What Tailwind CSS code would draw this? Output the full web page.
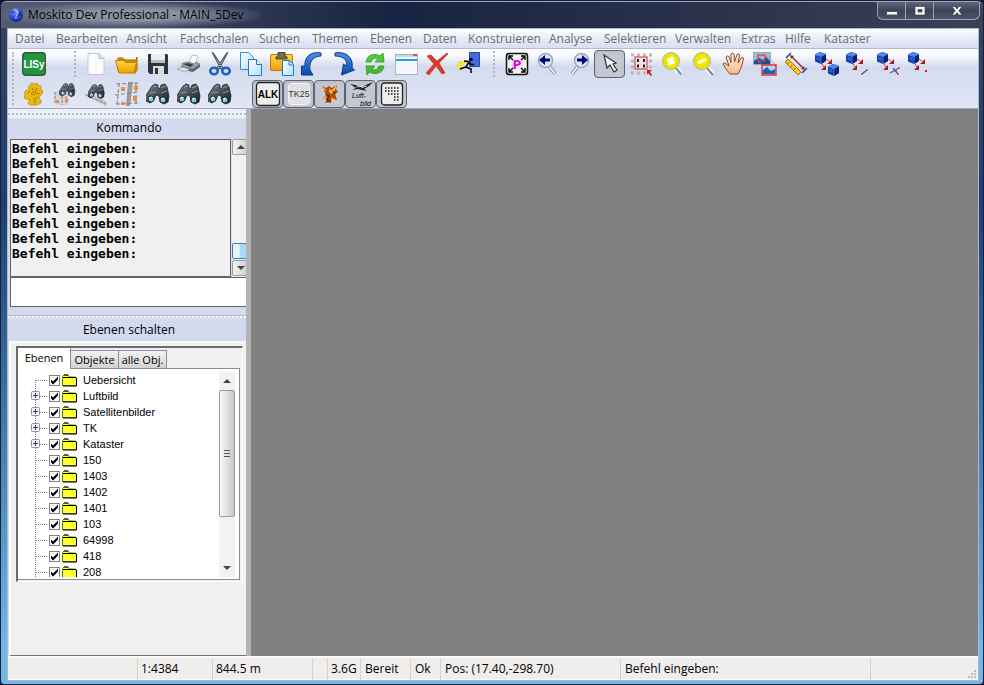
<!DOCTYPE html>
<html lang="de">
<head>
<meta charset="utf-8">
<title>Moskito Dev Professional - MAIN_5Dev</title>
<script src="https://cdn.jsdelivr.net/npm/@tailwindcss/browser@4"></script>
</head>
<body class="h-screen overflow-hidden bg-[#101830] text-xs font-['Open_Sans',sans-serif] text-black">

<svg class="absolute size-0" aria-hidden="true">
  <defs>
    <linearGradient id="gBlue" x1="0" y1="0" x2="0" y2="1"><stop offset="0" stop-color="#4a94ea"/><stop offset="1" stop-color="#0b47a8"/></linearGradient>
    <linearGradient id="gGold" x1="0" y1="0" x2="0" y2="1"><stop offset="0" stop-color="#ffd84a"/><stop offset="1" stop-color="#f0a000"/></linearGradient>
    <linearGradient id="gPage" x1="0" y1="0" x2="1" y2="1"><stop offset="0" stop-color="#fff"/><stop offset="1" stop-color="#b4defa"/></linearGradient>
    <linearGradient id="gDark" x1="0" y1="0" x2="1" y2="1"><stop offset="0" stop-color="#7c858c"/><stop offset="1" stop-color="#15191d"/></linearGradient>
    <linearGradient id="gHand" x1="0" y1="0" x2="0" y2="1"><stop offset="0" stop-color="#fff4e6"/><stop offset="1" stop-color="#f6b98a"/></linearGradient>
    <radialGradient id="gGlobe" cx=".4" cy=".25" r=".8"><stop offset="0" stop-color="#b4c6ff"/><stop offset=".4" stop-color="#3c5cf0"/><stop offset="1" stop-color="#10208a"/></radialGradient>
    <radialGradient id="gYellow"><stop offset="0" stop-color="#f8f600"/><stop offset="1" stop-color="#e2e000"/></radialGradient>
    <pattern id="dither" width="2" height="2" patternUnits="userSpaceOnUse"><rect width="2" height="2" fill="#ffff00"/><rect width="1" height="1" fill="#ffff60"/><rect x="1" y="1" width="1" height="1" fill="#ffff60"/></pattern>
  </defs>
  <symbol id="bino" viewBox="0 0 24 24">
    <path d="M6 4l3-2 3 1v3l2 .5L15 3l4-1 2 3 2 9-1 6-4 2-4-2-1-6-3-1-2 5-4 3-4-2-1-4z" fill="url(#gDark)" stroke="#20262b" stroke-width=".8"/>
    <path d="M7 5l4-1M15 6l5-2M4 11l6-1M15 11l6-2" stroke="#8c979f" stroke-width="1"/>
    <circle cx="5" cy="17" r="3" fill="#7cc8ea" stroke="#20282c" stroke-width="1"/><circle cx="17" cy="18" r="3" fill="#7cc8ea" stroke="#20282c" stroke-width="1"/>
    <path d="M3.500 16.500l2-1.500M15.500 17.500l2-1.500" stroke="#e8fbff" stroke-width="1.200"/>
  </symbol>
  <symbol id="cube" viewBox="0 0 11 12">
    <path d="M0 2.500L5 0l6 2v7l-5 3-6-2.500z" fill="#1440b0"/><path d="M0 2.500L5 0l6 2-5 2.500z" fill="#4f82ee"/><path d="M6 4.500L11 2v7l-5 3z" fill="#0a2070"/>
    <path d="M1.500 4.500l3 1.200v3l-3-1.200z" fill="#2b62da"/><path d="M0 2.500l6 2L11 2M6 4.500V12" stroke="#88b0ff" stroke-width=".5" fill="none"/>
  </symbol>
  <symbol id="cubearrows" viewBox="0 0 26 26">
    <use href="#cube" x="1" y="1" width="11" height="12"/>
    <path d="M12 8l3 2M8 13l2 3" stroke="#b04848"/><path d="M18 8v5h-5zM12 14v5H7z" fill="#b01818"/>
  </symbol>
  <symbol id="check" viewBox="0 0 11 11"><path d="M2 4.500v3l2 2 5-5v-3l-5 5z" fill="#000"/></symbol>
  <symbol id="folder" viewBox="0 0 15 13"><path d="M.5 11.500v-9L2 1h4l1.500 2h6l1 1v7.500z" fill="url(#dither)" stroke="#707000"/><path d="M14.500 4v8H1M1 3.500h13M2 1h4" fill="none" stroke="#000"/></symbol>
</svg>

<div class="flex h-full flex-col rounded-t-md rounded-b-sm border border-[#14203c] bg-linear-to-b from-[#39415a] from-0% via-[#1d4070] via-30% to-[#6fb9e4] to-95%">

  <header class="flex h-[27px] shrink-0 items-start justify-between rounded-t-md border-t border-[#a0a6b4] bg-linear-to-r from-[#555c72] via-[#182343] via-40% to-[#3b4054]">
    <div class="flex h-full items-center gap-1 rounded-full bg-radial from-[#8a91a2] from-30% to-transparent to-75% pr-4 pl-[7px]">
      <svg class="size-4" viewBox="0 0 16 16"><circle cx="8" cy="8" r="7" fill="url(#gGlobe)"/><path d="M2 5l3-2 3 2-2 2zM9 6l4-2 1 4-4 1zM7 9l2 1-1 4z" fill="#101c70" opacity=".55"/><path d="M8 4l2 1v2l-2 2v3" stroke="#c9d6ff" fill="none"/></svg>
      <h1>Moskito Dev Professional - MAIN_5Dev</h1>
    </div>
    <div class="mr-[3px] flex h-[18px] overflow-hidden rounded-b-md border border-t-0 border-[#9ea3b0] bg-linear-to-b from-[#60667a] via-[#3c4258] to-[#4c5268]">
      <button aria-label="Minimieren" class="grid w-7 place-items-center border-r border-[#9ea3b0]"><svg class="h-3 w-4" viewBox="0 0 16 12"><rect x="2.500" y="6.500" width="11" height="3.500" fill="#f4f4f4" stroke="#555"/></svg></button>
      <button aria-label="Maximieren" class="grid w-7 place-items-center border-r border-[#9ea3b0]"><svg class="h-3 w-4" viewBox="0 0 16 12"><path d="M3 1.500h10v8.500H3zM6 4.500V7h4V4.500z" fill="#f8f8f8" fill-rule="evenodd" stroke="#444" stroke-width=".7"/></svg></button>
      <button aria-label="Schließen" class="grid w-[45px] place-items-center"><svg class="h-3 w-4" viewBox="0 0 16 12"><path d="M3 1.500h3L8 4l2-2.500h3L9.800 5.800 13 10h-3L8 7.500 6 10H3l3.200-4.200z" fill="#fff" stroke="#444" stroke-width=".7"/></svg></button>
    </div>
  </header>

  <div class="mr-[4px] mb-[3px] ml-[6px] flex min-h-0 grow flex-col border border-[#a9bcd4] bg-[#d3daee]">

    <nav class="grid h-5 shrink-0 grid-cols-[41px_70px_54px_79px_53px_58px_53px_45px_81px_55px_71px_66px_44px_39px_60px] items-center border-b border-[#b5bccb] bg-linear-to-b from-white via-[#e9edf7] via-45% to-[#d8def0] pl-[7px] whitespace-nowrap text-[#6d6d6d]">
      <a href="#">Datei</a><a href="#">Bearbeiten</a><a href="#">Ansicht</a><a href="#">Fachschalen</a><a href="#">Suchen</a><a href="#">Themen</a><a href="#">Ebenen</a><a href="#">Daten</a><a href="#">Konstruieren</a><a href="#">Analyse</a><a href="#">Selektieren</a><a href="#">Verwalten</a><a href="#">Extras</a><a href="#">Hilfe</a><a href="#">Kataster</a>
    </nav>

    <div class="flex h-[60px] shrink-0 border-b border-[#a0a8bc] bg-linear-to-b from-[#fafbfe] from-10% via-[#d4dbee] via-30% to-[#e1e7f5] pl-1">
      <div class="my-[3px] mr-1 w-0 border-l-2 border-dotted border-[#b3b8c4]"></div>
      <div class="flex flex-col">
        <div class="flex h-[30px] items-center">
          <button aria-label="LISy" class="grid h-[30px] w-[31px] place-items-center"><svg class="size-6" viewBox="0 0 24 24"><rect x=".7" y=".7" width="22.600" height="22.600" rx="3" fill="#21963f" stroke="#3c5545" stroke-width="1.400"/><text x="12" y="16" text-anchor="middle" font-family="Liberation Sans, sans-serif" font-size="10" font-weight="bold" fill="#fff">LISy</text></svg></button>
          <div class="mr-1 ml-[25px] h-[26px] w-0 border-l-2 border-dotted border-[#b3b8c4]"></div>
          <button aria-label="Neu" class="grid h-[30px] w-[31px] place-items-center"><svg class="size-6" viewBox="0 0 24 24"><path d="M4 1.500h11l5 5v16H4z" fill="#fafafa" stroke="#c5c8cc"/><path d="M15 1.500v5h5" fill="#dedede" stroke="#bbb"/></svg></button>
          <button aria-label="Öffnen" class="grid h-[30px] w-[31px] place-items-center"><svg class="size-6" viewBox="0 0 24 24"><path d="M3 19V6h5l2 2h11l1-3v13l-2 3z" fill="#d99000" stroke="#a86c00"/><path d="M.5 8.500h8l2 2h11L19 21H4z" fill="url(#gGold)" stroke="#bd8000"/></svg></button>
          <button aria-label="Speichern" class="grid h-[30px] w-[31px] place-items-center"><svg class="size-6" viewBox="0 0 24 24"><path d="M2 2h19l1 1v19H4l-2-2z" fill="#30343a"/><path d="M5 2h14v9H5z" fill="#eceef0"/><path d="M5 8h14v3H5z" fill="#b8bec5"/><path d="M7 14h11v8H7z" fill="#d8dce0"/><path d="M9 16h3v6H9z" fill="#30343a"/></svg></button>
          <button aria-label="Drucken" class="grid h-[30px] w-[31px] place-items-center"><svg class="size-6" viewBox="0 0 24 24"><path d="M12 11l3-8 6 1-3 8z" fill="#fff" stroke="#a0a5ab" stroke-width=".7"/><path d="M5 11l7-1 6 2 1-2 4 2-7 5-11-3z" fill="#9da2a8" stroke="#70757b" stroke-width=".6"/><path d="M3 14l13 3 7-5v3l-7 5-9-2z" fill="#5d6268"/><path d="M6 12l5-1 6 2-4 2z" fill="#3c4147"/><path d="M0 17l5-2 8 2-5 3z" fill="#dce0e6" stroke="#83888e" stroke-width=".6"/></svg></button>
          <button aria-label="Ausschneiden" class="grid h-[30px] w-[31px] place-items-center"><svg class="size-6" viewBox="0 0 24 24"><path d="M4 0l2 2 9 14-2 1zM20 0l-2 2-9 14 2 1z" fill="#d3d8dc" stroke="#50565c" stroke-width="1.100"/><ellipse cx="6" cy="19" rx="3.800" ry="3.300" fill="none" stroke="#1763bf" stroke-width="2.500"/><ellipse cx="18" cy="19" rx="3.800" ry="3.300" fill="none" stroke="#1763bf" stroke-width="2.500"/></svg></button>
          <button aria-label="Kopieren" class="grid h-[30px] w-[31px] place-items-center"><svg class="size-6" viewBox="0 0 24 24"><path d="M1.500.500h8l5 5v12h-13z" fill="url(#gPage)" stroke="#2790e2"/><path d="M9.500 7.500h8l5 5v11h-13z" fill="url(#gPage)" stroke="#1c7bd4"/><path d="M17.500 7.500v5h5" fill="#e8f6ff" stroke="#1c7bd4"/></svg></button>
          <button aria-label="Einfügen" class="grid h-[30px] w-[31px] place-items-center"><svg class="size-6" viewBox="0 0 24 24"><rect x=".5" y="2.500" width="22" height="16" rx="1.500" fill="url(#gGold)" stroke="#b87818"/><path d="M8 4V.5h7V4l2 1v2H6V5z" fill="#786951" stroke="#504432"/><path d="M12.500 8.500h7l4 4v11h-11z" fill="url(#gPage)" stroke="#1c7bd4"/><path d="M19 8v5h4" fill="none" stroke="#1c7bd4"/></svg></button>
          <button aria-label="Rückgängig" class="grid h-[30px] w-[31px] place-items-center"><svg class="size-6" viewBox="0 0 24 24"><path d="M20 1C10-1 3 5 4 14H.5v9H12l-3-5c-1-7 2-14 11-14z" fill="url(#gBlue)" stroke="#0b3b86"/></svg></button>
          <button aria-label="Wiederholen" class="grid h-[30px] w-[31px] place-items-center"><svg class="size-6" viewBox="0 0 24 24"><path d="M3 1C13-1 22 5 20 16l2.500 2-13 5 2-11 3 2C16 8 11 4 3 4z" fill="url(#gBlue)" stroke="#0b3b86"/></svg></button>
          <button aria-label="Aktualisieren" class="grid h-[30px] w-[31px] place-items-center"><svg class="size-6" viewBox="0 0 24 24"><path d="M3 10c1-8 10-9 14-6l3-3 1 9h-9l3-3c-4-2-6 0-7 3z" fill="#51c83b" stroke="#37a72b"/><path d="M21 14c-1 8-10 9-14 6l-3 3-1-9h9l-3 3c4 2 6 0 7-3z" fill="#43b932" stroke="#37a72b"/></svg></button>
          <button aria-label="Fenster" class="grid h-[30px] w-[31px] place-items-center"><svg class="size-6" viewBox="0 0 24 24"><rect x="1.500" y="2.500" width="22" height="20" fill="#f5f6f8" stroke="#aab2bb"/><path d="M2 3h21v2H2z" fill="#b8d8ec"/><path d="M2 7h21v2H2z" fill="#2a9bd4"/><path d="M19 2h4v2h-4z" fill="#d85a4a"/></svg></button>
          <button aria-label="Löschen" class="grid h-[30px] w-[31px] place-items-center"><svg class="size-6" viewBox="0 0 24 24"><path d="M2 4l4-1 6 6 10-8 1 1-9 9 6 10-3 1-6-8-7 9-3-2 8-9z" fill="#dc3b28" stroke="#bd2618" stroke-width=".6"/></svg></button>
          <button aria-label="Beenden" class="grid h-[30px] w-[31px] place-items-center"><svg class="size-6" viewBox="0 0 24 24"><path d="M13.500.500h10v14h-10z" fill="#446bd9" stroke="#2348ae"/><path d="M2 10.500h8M0 13.500h7M2 16.500h5" stroke="#f5e200" stroke-width="2"/><circle cx="15" cy="7.500" r="1.800"/><path d="M8 9l4 .5 3 3h3M13 10l-3 5-6 2M10 15l5 2v4" fill="none" stroke="#000" stroke-width="1.500"/></svg></button>
          <div class="mr-[6px] ml-[10px] h-[26px] w-0 border-l-2 border-dotted border-[#b3b8c4]"></div>
          <button aria-label="Alles zeigen" class="grid h-[30px] w-[31px] place-items-center"><svg class="size-6" viewBox="0 0 24 24"><rect x="1.500" y="1.500" width="21" height="21" rx="2.500" fill="#f2f2f2" stroke="#111" stroke-width="1.500"/><path d="M4 8V4h4M16 4h4v4M20 16v4h-4M8 20H4v-4M4 4l4 4M20 4l-4 4M20 20l-4-4M4 20l4-4" fill="none" stroke="#000" stroke-width="1.400"/><text x="12" y="16.500" text-anchor="middle" font-family="DejaVu Sans, sans-serif" font-size="12" font-weight="bold" fill="#f000e8">P</text></svg></button>
          <button aria-label="Voriger Zoom" class="grid h-[30px] w-[31px] place-items-center"><svg class="size-6" viewBox="0 0 24 24"><path d="M13 14l6 8" stroke="#777e88" stroke-width="3.500"/><path d="M13 14l6 8" stroke="#eef0f3" stroke-width="2"/><circle cx="9.500" cy="8.500" r="7" fill="#dbeaf8" stroke="#98a8bc" stroke-width="1.500"/><path d="M3 8l6-5v3.500h5v3H9V13z" fill="#04047c"/></svg></button>
          <button aria-label="Nächster Zoom" class="grid h-[30px] w-[31px] place-items-center"><svg class="size-6" viewBox="0 0 24 24"><path d="M11 14l-6 8" stroke="#777e88" stroke-width="3.500"/><path d="M11 14l-6 8" stroke="#eef0f3" stroke-width="2"/><circle cx="14.500" cy="8.500" r="7" fill="#dbeaf8" stroke="#98a8bc" stroke-width="1.500"/><path d="M21 8l-6-5v3.500h-5v3h5V13z" fill="#04047c"/></svg></button>
          <button aria-label="Auswahl" class="grid h-[28px] w-[31px] place-items-center rounded border border-[#5e6470] bg-[#c3c8d4] shadow-inner"><svg class="size-6" viewBox="0 0 24 24"><path d="M6 3l3 13 3-3 4 7 3-2-4-6 3-1z" fill="#f5f5f5" stroke="#303438" stroke-width="1.200"/></svg></button>
          <button aria-label="Bereich wählen" class="grid h-[30px] w-[31px] place-items-center"><svg class="size-6" viewBox="0 0 24 24"><path d="M2 3h21M2 9h21M2 15h21M2 21h17" stroke="#b4b7bc" stroke-width="3" stroke-dasharray="3 3"/><rect x="6" y="5" width="12" height="12" fill="#efe3e9" stroke="#e34141" stroke-width="1.200"/><path d="M8 8.500h2M14 8.500h2M8 14h2M14 14h2" stroke="#202020" stroke-width="3"/><path d="M18 18h5l-2 2 2 3-1 1-3-3-1 2z" fill="#df1212"/></svg></button>
          <button aria-label="Vergrößern" class="grid h-[30px] w-[31px] place-items-center"><svg class="size-6" viewBox="0 0 24 24"><path d="M15 15l6 7" stroke="#fff" stroke-width="5"/><path d="M15 15l6 7" stroke="#9299a0" stroke-width="2.500"/><path d="M18 20l3 3" stroke="#35c3d8" stroke-width="1.500"/><circle cx="11" cy="9" r="8.500" fill="url(#gYellow)" stroke="#b2b5a0"/><path d="M7.500 7l7 4M13 5l-4 8" stroke="#fff" stroke-width="3.400"/></svg></button>
          <button aria-label="Verkleinern" class="grid h-[30px] w-[31px] place-items-center"><svg class="size-6" viewBox="0 0 24 24"><path d="M15 15l6 7" stroke="#fff" stroke-width="5"/><path d="M15 15l6 7" stroke="#9299a0" stroke-width="2.500"/><path d="M19 20l3 3" stroke="#9562c0" stroke-width="1.500"/><circle cx="11" cy="9" r="8.500" fill="url(#gYellow)" stroke="#b2b5a0"/><path d="M7 11l8-4" stroke="#fff" stroke-width="3"/></svg></button>
          <button aria-label="Verschieben" class="grid h-[30px] w-[31px] place-items-center"><svg class="size-6" viewBox="0 0 24 24"><path d="M8 22l-4-5-3-5q1-2 3 0l3 2L4 5q1-2 3-.5l2 6V2q1.500-2 3 0l.5 8L15 2.500q2-1.500 2.500.5L16 11l3.500-5.500q2-.5 2 1.500L19 16l-3 6z" fill="url(#gHand)" stroke="#8d4a24"/></svg></button>
          <button aria-label="Übersicht" class="grid h-[30px] w-[31px] place-items-center"><svg class="size-6" viewBox="0 0 24 24"><rect x=".5" y=".5" width="17" height="12" fill="#98bde0" stroke="#a0a5ad"/><path d="M1 9l5-3 4 2 3-3 4 4v3H1z" fill="#164f9c"/><rect x="5" y="3" width="7" height="6" fill="none" stroke="#e83a3a" stroke-width="1.200"/><path d="M5 9l4 4M12 3l11 10" stroke="#e87070" stroke-width=".7"/><rect x="9" y="13" width="14" height="10" fill="#b8d5ef" stroke="#e02020" stroke-width="1.300"/><path d="M10 18l4-3 4 4 4-2v5H10z" fill="#2563aa"/></svg></button>
          <button aria-label="Messen" class="grid h-[30px] w-[31px] place-items-center"><svg class="size-6" viewBox="0 0 24 24"><path d="M4 7l13 13-3 3L1 10z" fill="#ffc725" stroke="#a87600"/><path d="M5 10l-1 2M8 13l-1 2M11 16l-1 2" stroke="#805800" stroke-width=".8"/><path d="M2 6l5-5M18 21l5-5" stroke="#1c49a2" stroke-width="1.500"/><path d="M8 5l11 11" stroke="#a02020" stroke-width="1.200"/><path d="M6 3l4 1-3 3zM21 18l-4-1 3-3z" fill="#a02020"/></svg></button>
          <button aria-label="Objekt kopieren" class="grid h-[30px] w-[31px] place-items-center"><svg class="size-[26px]" viewBox="0 0 26 26"><use href="#cubearrows" width="26" height="26"/><use href="#cube" x="14" y="13" width="11" height="12"/></svg></button>
          <button aria-label="Linie übernehmen" class="grid h-[30px] w-[31px] place-items-center"><svg class="size-[26px]" viewBox="0 0 26 26"><use href="#cubearrows" width="26" height="26"/><path d="M17 23l5-4" stroke="#4050c0" stroke-width="1.200"/><path d="M16 23h2M21 19h2" stroke="#d02020"/></svg></button>
          <button aria-label="Schnittpunkt übernehmen" class="grid h-[30px] w-[31px] place-items-center"><svg class="size-[26px]" viewBox="0 0 26 26"><use href="#cubearrows" width="26" height="26"/><path d="M14 22l9-5M17 17l5 6" stroke="#4858b0" stroke-width="1.200"/><path d="M19 20h2M22 17h2M21 23h2" stroke="#d02020"/></svg></button>
          <button aria-label="Punkt übernehmen" class="grid h-[30px] w-[31px] place-items-center"><svg class="size-[26px]" viewBox="0 0 26 26"><use href="#cubearrows" width="26" height="26"/><path d="M18 20h2" stroke="#d02020" stroke-width="2"/></svg></button>
        </div>
        <div class="flex h-[30px] items-center">
          <button aria-label="Landeswappen" class="grid h-[30px] w-[31px] place-items-center"><svg class="size-6" viewBox="0 0 24 24"><path d="M9 1l3 1 3-1 1 2 3 1v3l2 2-1 3-2 2-1 2 2 2v3l-4 2H9l-3-1 1-3 2-2-3 1-4-2 1-3-1-2 2-3 2 1 1-2-1-2 2-1z" fill="#e8b711" stroke="#c9960a" stroke-width=".8"/><path d="M10 6l2 3-3 3 4 1M15 6l-2 5 5 1M8 9l-2 2M12 16l1 5M15 15l-2 3" fill="none" stroke="#a87c08" stroke-width="1"/></svg></button>
          <button aria-label="Flurstück suchen" class="grid h-[30px] w-[31px] place-items-center"><svg class="size-6" viewBox="0 0 24 24"><path d="M2 9h14v14H2z" fill="#d4d6da"/><path d="M2 10v12M9 10v13M13 10v12" stroke="#9a9da3" stroke-width="1.500" stroke-dasharray="3 1"/><path d="M3 18h3v3H3zM12 17h3v3h-3z" fill="#f08b3c"/><use href="#bino" x="6" y="0" width="17" height="16"/></svg></button>
          <button aria-label="Straße suchen" class="grid h-[30px] w-[31px] place-items-center"><svg class="size-6" viewBox="0 0 24 24"><path d="M0 13l5-2 18 9-1 4z" fill="#c3c3bf"/><path d="M2 13l20 9" stroke="#858580" stroke-dasharray="3 2"/><use href="#bino" x="4" y="1" width="17" height="17"/></svg></button>
          <button aria-label="Lageplan" class="grid h-[30px] w-[31px] place-items-center"><svg class="size-6" viewBox="0 0 24 24"><path d="M13 0h5l-3 24h-4z" fill="#9a9c9c"/><path d="M0 13l24-3M1 2l22-1M1 22l22-1M4 1L2 23M21 1v21" stroke="#858c92" stroke-width="1.200" stroke-dasharray="4 2"/><path d="M6 5h4v4H6zM19 4h4v4h-4zM6 20h4v3H6zM18 14h4v5h-4z" fill="#ef8b3e"/></svg></button>
          <button aria-label="Suche 1" class="grid h-[30px] w-[31px] place-items-center"><svg class="size-6"><use href="#bino"/></svg></button>
          <button aria-label="Suche 2" class="grid h-[30px] w-[31px] place-items-center"><svg class="size-6"><use href="#bino"/></svg></button>
          <button aria-label="Suche 3" class="mr-[17px] grid h-[30px] w-[31px] place-items-center"><svg class="size-6"><use href="#bino"/></svg></button>
          <button aria-label="ALK" class="grid h-7 w-[31px] place-items-center rounded border border-[#5e6470] bg-[#c3c8d4] shadow-inner"><svg class="size-[26px]" viewBox="0 0 26 26"><rect x="1.500" y="1.500" width="23" height="23" rx="3" fill="#eee" stroke="#222" stroke-width="1.300"/><text x="13" y="17" text-anchor="middle" font-family="Liberation Sans, sans-serif" font-size="10" font-weight="bold">ALK</text></svg></button>
          <button aria-label="TK25" class="grid h-7 w-[31px] place-items-center rounded border border-[#5e6470] bg-[#c3c8d4] shadow-inner"><svg class="size-[26px]" viewBox="0 0 26 26"><rect x="2.500" y="2.500" width="21" height="21" rx="3" fill="#e1e1e3" stroke="#f5f5f5"/><text x="13" y="16" text-anchor="middle" font-family="Liberation Sans, sans-serif" font-size="9" fill="#383838">TK25</text></svg></button>
          <button aria-label="Satellitenbild" class="grid h-7 w-[31px] place-items-center rounded border border-[#5e6470] bg-[#c3c8d4] shadow-inner"><svg class="size-6" viewBox="0 0 24 24"><path d="M4 4l4 2 3-2 3 2 5-3-1 4 2 3-3 2 2 6-4-1-2 3-6 1 2-4-4-1 3-3z" fill="#b54614"/><path d="M4 4l5 5-3-1zM12 6l1 3 6-6-3 7-3 2-2-3zM14 15l3 4-4 1zM6 14l3 1-2 2z" fill="#ffd52a"/><path d="M8 12l3 2-2 4 4 2M15 9l2 3" stroke="#682408" fill="none" stroke-width="1.500"/></svg></button>
          <button aria-label="Luftbild" class="grid h-7 w-[31px] place-items-center rounded border border-[#5e6470] bg-[#c3c8d4] shadow-inner"><svg class="size-[26px]" viewBox="0 0 26 26"><path d="M2 3l5 1 6 2 5-2 7-3-4 4-5 3 3 2-5-1-4-1-6 1 4-2z" fill="#181a1e"/><path d="M8 6l9-1M13 7l6-2" stroke="#fff" stroke-width=".7"/><g font-family="Liberation Sans, sans-serif" font-size="7" font-style="italic"><text x="4" y="17">Luft-</text><text x="12" y="25">bild</text></g></svg></button>
          <button aria-label="Raster" class="grid h-7 w-[31px] place-items-center rounded border border-[#5e6470] bg-[#c3c8d4] shadow-inner"><svg class="size-[26px]" viewBox="0 0 26 26"><rect x="2.500" y="2" width="21" height="22" rx="3" fill="#eee" stroke="#222" stroke-width="1.300"/><path d="M6 7h15M6 10h15M9 13h12M15 16h6M15 19h6" stroke="#111" stroke-width="1.600" stroke-dasharray="1.500 1.500"/></svg></button>
        </div>
      </div>
    </div>

    <div class="flex min-h-0 grow">
      <aside class="flex w-[238px] shrink-0 flex-col overflow-hidden">
        <div class="flex h-[9px] shrink-0 items-center bg-[#edf0f8]"><div class="w-full border-t-2 border-dotted border-[#b6bccb]"></div></div>
        <h2 class="h-[21px] shrink-0 pl-1 text-center leading-5">Kommando</h2>
        <div class="flex h-[138px] shrink-0 pl-[2px]">
          <div id="log" class="grow overflow-hidden border border-[#646464] bg-[#f0f0f0] pt-px pl-px font-['DejaVu_Sans_Mono',monospace] text-[13px] leading-[15px] font-bold"></div>
          <div class="ml-px flex w-[14px] shrink-0 flex-col overflow-hidden bg-[#f2f2f2]">
            <button aria-label="Nach oben" class="grid h-4 w-[17px] place-items-center rounded-xs border border-[#999] bg-linear-to-r from-[#f4f4f4] to-[#ccc]"><svg class="h-1 w-2" viewBox="0 0 8 4"><path d="M0 4l4-4 4 4z" fill="#444"/></svg></button>
            <div class="mt-[88px] h-4 w-[17px] rounded-xs border border-[#3c7fb1] bg-linear-to-r from-[#e3f4fc] from-40% to-[#a9dbf5] to-50%"></div>
            <button aria-label="Nach unten" class="mt-px grid h-4 w-[17px] place-items-center rounded-xs border border-[#999] bg-linear-to-r from-[#f4f4f4] to-[#ccc]"><svg class="h-1 w-2" viewBox="0 0 8 4"><path d="M0 0h8L4 4z" fill="#444"/></svg></button>
          </div>
        </div>
        <input aria-label="Befehl" type="text" class="ml-[2px] h-[30px] shrink-0 border border-r-0 border-[#646464] bg-white px-1 outline-none">
        <div class="flex h-[11px] shrink-0 items-end"><div class="w-full border-t-2 border-dotted border-[#f5f6fb] shadow-[0_-1px_0_#b6bccb]"></div></div>
        <h2 class="h-[23px] shrink-0 pl-1 text-center leading-6">Ebenen schalten</h2>

        <div class="ml-px flex min-h-0 grow flex-col border-t-2 border-b border-l-2 border-t-[#fafafa] border-b-[#707070] border-l-white bg-[#f0f0f0] pt-[3px] pr-[3px] pl-[5px]">
          <div class="flex h-[236px] flex-col border-t-2 border-r border-b border-l-2 border-t-[#6b6b6b] border-r-white border-b-white border-l-[#6b6b6b] pr-[2px] pb-px font-['Liberation_Sans',sans-serif]">
            <div role="tablist" class="flex h-[21px] shrink-0 items-end">
              <button role="tab" aria-selected="true" class="h-full w-[53px] border-r border-[#8a8a9a] bg-white pb-px font-['Open_Sans',sans-serif] text-[11px]">Ebenen</button>
              <button role="tab" class="h-[19px] w-12 border border-l-0 border-[#8a8a9a] bg-linear-to-b from-[#f2f2f2] to-[#d2d2d2] font-['Open_Sans',sans-serif] text-[11px] leading-4">Objekte</button>
              <button role="tab" class="h-[19px] w-12 border border-l-0 border-[#8a8a9a] bg-linear-to-b from-[#f2f2f2] to-[#d2d2d2] font-['Open_Sans',sans-serif] text-[11px] leading-4">alle Obj.</button>
              <div class="grow border-b border-[#8a8a9a]"></div>
            </div>
            <div class="flex min-h-0 grow border-r border-b border-[#8a8a9a] bg-white pt-[3px] pr-1 pb-[2px] pl-[13px]">
              <ul id="tree" class="grow overflow-hidden text-[11px]"></ul>
              <div class="flex w-4 shrink-0 flex-col bg-[#f2f2f2]">
                <button aria-label="Nach oben" class="grid h-[18px] place-items-center"><svg class="h-1 w-2" viewBox="0 0 8 4"><path d="M0 4l4-4 4 4z" fill="#444"/></svg></button>
                <div class="grid h-[127px] place-items-center rounded-xs border border-[#999] bg-linear-to-r from-[#f6f6f6] via-[#e2e2e4] to-[#c6c6ca]"><svg class="h-2 w-2" viewBox="0 0 8 8"><path d="M1 .5h6M1 3.500h6M1 6.500h6" stroke="#555"/></svg></div>
                <button aria-label="Nach unten" class="mt-auto grid h-[18px] place-items-center"><svg class="h-1 w-2" viewBox="0 0 8 4"><path d="M0 0h8L4 4z" fill="#444"/></svg></button>
              </div>
            </div>
          </div>
        </div>
      </aside>
      <div class="w-[5px] shrink-0 bg-[#b4b4b4]"></div>
      <main class="grow bg-[#808080]" aria-label="Karte"></main>
    </div>

    <footer class="grid h-6 shrink-0 grid-cols-[129px_75px_100px_15px_33px_50px_30px_180px_250px_1fr] border-t-2 border-b border-white border-t-[#fbfbfb] bg-[#f0eded] leading-[22px] whitespace-nowrap">
      <div></div>
      <div class="border-l border-[#d2d2d2] pl-[3px]">1:4384</div>
      <div class="border-l border-[#d2d2d2] pl-[3px]">844.5 m</div>
      <div class="border-l border-[#d2d2d2]"></div>
      <div class="border-l border-[#d2d2d2] pl-[3px]">3.6G</div>
      <div class="border-l border-[#d2d2d2] pl-1">Bereit</div>
      <div class="border-l border-[#d2d2d2] pl-1">Ok</div>
      <div class="border-l border-[#d2d2d2] pl-1">Pos: (17.40,-298.70)</div>
      <div class="border-l border-[#d2d2d2] pl-1">Befehl eingeben:</div>
      <div class="flex items-end justify-end border-l border-[#d2d2d2] p-px"><svg class="size-[10px]" viewBox="0 0 10 10"><path d="M7 1h2v2H7zM7 4h2v2H7zM4 4h2v2H4zM7 7h2v2H7zM4 7h2v2H4zM1 7h2v2H1z" fill="#bdbdbd"/></svg></div>
    </footer>
  </div>
</div>

<script>
  document.getElementById('log').innerHTML = Array(8).fill('<p>Befehl eingeben:</p>').join('');

  const layers = [['Uebersicht', false], ['Luftbild', true], ['Satellitenbilder', true], ['TK', true], ['Kataster', true],
    ['150'], ['1403'], ['1402'], ['1401'], ['103'], ['64998'], ['418'], ['208']];
  const plus = '<rect x=".5" y="3.500" width="8" height="8" rx="1" fill="#f4f4f4" stroke="#919191"/><path d="M2 7.500h5M4.500 5v5" stroke="#2b3a8c"/>';
  document.getElementById('tree').innerHTML = layers.map(([name, children], i) => `
    <li class="flex h-4 items-center">
      <svg class="h-4 w-[18px] shrink-0" viewBox="0 0 18 16"><path d="M4.500 ${i ? 0 : 8}V16M5 8.500h11" stroke="#808080" stroke-dasharray="1 1" fill="none"/>${children ? plus : ''}</svg>
      <span class="grid shrink-0">
        <input id="layer${i}" type="checkbox" checked class="size-[11px] appearance-none border border-[#808080] bg-white [grid-area:1/1]">
        <svg class="pointer-events-none size-[11px] [grid-area:1/1]"><use href="#check"/></svg>
      </span>
      <svg class="ml-[2px] h-[13px] w-[15px] shrink-0"><use href="#folder"/></svg>
      <label for="layer${i}" class="pl-[6px] leading-4">${name}</label>
    </li>`).join('');
</script>
</body>
</html>
